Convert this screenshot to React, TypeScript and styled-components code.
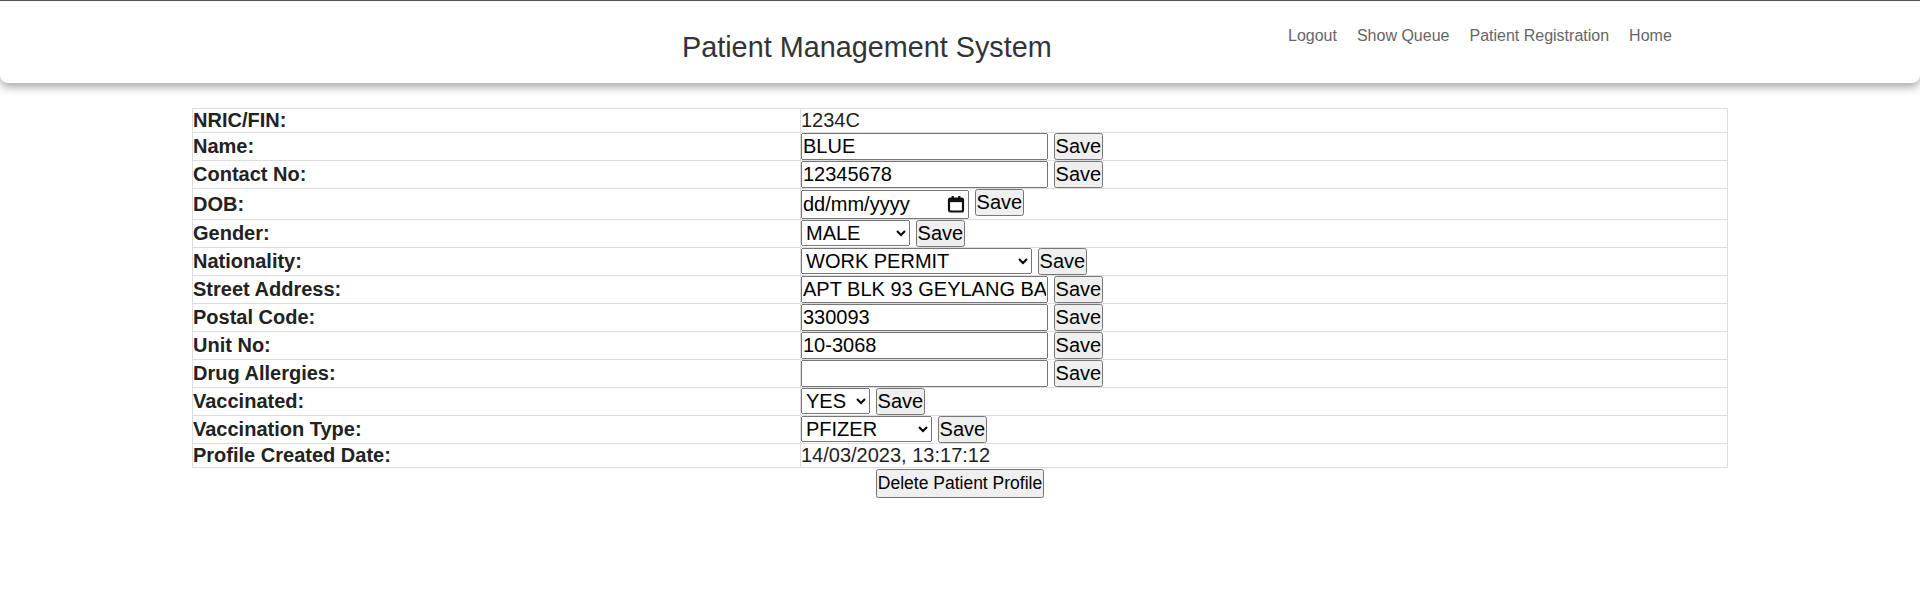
import React from "react";
import styled, { createGlobalStyle } from "styled-components";

const GlobalStyle = createGlobalStyle`
  * { margin: 0; padding: 0; }
  html, body { background: #fff; }
  body {
    font-family: "Liberation Sans", Arial, sans-serif;
    color: #222;
  }
  input, select, button {
    font-family: "Liberation Sans", Arial, sans-serif;
    font-size: 20px;
  }
`;

const Header = styled.header`
  display: flex;
  align-items: flex-start;
  height: 83px;
  box-sizing: border-box;
  padding: 26px 0 0 682px;
  background: #fff;
  border-top: 1px solid #555;
  border-radius: 0 0 8px 8px;
  box-shadow: 0 4px 10px rgba(0, 0, 0, 0.35);
`;

const Title = styled.h1`
  width: 596px;
  margin-top: 4px;
  font-size: 28.8px;
  font-weight: normal;
  color: #333;
`;

const Nav = styled.nav`
  display: flex;
`;

const NavLink = styled.a`
  padding: 0 10px;
  font-size: 16px;
  color: #666;
  text-decoration: none;
  cursor: pointer;
`;

const Table = styled.table`
  width: 80%;
  margin: 25px auto 0;
  border-collapse: collapse;
  font-size: 20px;
`;

const LabelCell = styled.td`
  width: 607px;
  border: 1px solid #ddd;
  font-weight: bold;
`;

const ValueCell = styled.td`
  border: 1px solid #ddd;
`;

const TextInput = styled.input`
  width: 247px;
  box-sizing: border-box;
`;

const Select = styled.select<{ $w: number }>`
  width: ${(p) => p.$w}px;
`;

const DateWrap = styled.span`
  position: relative;
  display: inline-block;
  vertical-align: middle;
  margin: 1px 0 0;
`;

const DateInput = styled.input`
  display: block;
  width: 168px;
  height: 29px;
  box-sizing: border-box;
  &::placeholder {
    color: #000;
    opacity: 1;
  }
`;

const CalendarIcon = styled.svg`
  position: absolute;
  right: 4px;
  top: 5px;
  width: 18px;
  height: 18px;
  pointer-events: none;
`;

const Footer = styled.div`
  text-align: center;
  padding-top: 1px;
`;

const DeleteButton = styled.button`
  font-size: 17.5px;
  padding: 2px 0;
`;

type Row =
  | { label: string; kind: "text"; value: string }
  | { label: string; kind: "input"; value: string }
  | { label: string; kind: "date" }
  | { label: string; kind: "select"; value: string; options: string[]; width: number };

const rows: Row[] = [
  { label: "NRIC/FIN:", kind: "text", value: "1234C" },
  { label: "Name:", kind: "input", value: "BLUE" },
  { label: "Contact No:", kind: "input", value: "12345678" },
  { label: "DOB:", kind: "date" },
  { label: "Gender:", kind: "select", value: "MALE", options: ["MALE", "FEMALE"], width: 109 },
  {
    label: "Nationality:",
    kind: "select",
    value: "WORK PERMIT",
    options: ["SINGAPOREAN", "EMPLOYMENT PASS", "WORK PERMIT"],
    width: 231,
  },
  { label: "Street Address:", kind: "input", value: "APT BLK 93 GEYLANG BAHRU" },
  { label: "Postal Code:", kind: "input", value: "330093" },
  { label: "Unit No:", kind: "input", value: "10-3068" },
  { label: "Drug Allergies:", kind: "input", value: "" },
  { label: "Vaccinated:", kind: "select", value: "YES", options: ["YES", "NO"], width: 69 },
  {
    label: "Vaccination Type:",
    kind: "select",
    value: "PFIZER",
    options: ["PFIZER", "MODERNA", "SINOVAC"],
    width: 131,
  },
  { label: "Profile Created Date:", kind: "text", value: "14/03/2023, 13:17:12" },
];

function renderValue(row: Row) {
  switch (row.kind) {
    case "text":
      return row.value;
    case "input":
      return (
        <>
          <TextInput type="text" defaultValue={row.value} /> <button>Save</button>
        </>
      );
    case "date":
      return (
        <>
          <DateWrap>
            <DateInput type="text" placeholder="dd/mm/yyyy" />
            <CalendarIcon viewBox="0 0 18 18">
              <rect x="2" y="3.5" width="14" height="13" rx="1.5" fill="none" stroke="#111" strokeWidth="2.2" />
              <rect x="2" y="3.5" width="14" height="3.6" fill="#111" />
              <rect x="4.6" y="1" width="2.2" height="3.5" fill="#111" />
              <rect x="11.2" y="1" width="2.2" height="3.5" fill="#111" />
            </CalendarIcon>
          </DateWrap>{" "}
          <button>Save</button>
        </>
      );
    case "select":
      return (
        <>
          <Select $w={row.width} defaultValue={row.value}>
            {row.options.map((o) => (
              <option key={o} value={o}>
                {o}
              </option>
            ))}
          </Select>{" "}
          <button>Save</button>
        </>
      );
  }
}

export default function App() {
  return (
    <>
      <GlobalStyle />
      <Header>
        <Title>Patient Management System</Title>
        <Nav>
          <NavLink>Logout</NavLink>
          <NavLink>Show Queue</NavLink>
          <NavLink>Patient Registration</NavLink>
          <NavLink>Home</NavLink>
        </Nav>
      </Header>
      <Table>
        <tbody>
          {rows.map((r) => (
            <tr key={r.label}>
              <LabelCell>{r.label}</LabelCell>
              <ValueCell>{renderValue(r)}</ValueCell>
            </tr>
          ))}
        </tbody>
      </Table>
      <Footer>
        <DeleteButton>Delete Patient Profile</DeleteButton>
      </Footer>
    </>
  );
}
